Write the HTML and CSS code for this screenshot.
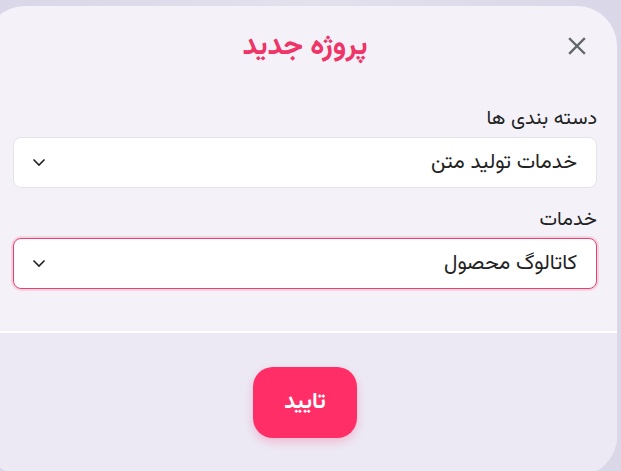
FILE: index.html
```html
<!DOCTYPE html>
<html lang="fa" dir="rtl">
<head>
<meta charset="utf-8">
<title>پروژه جدید</title>
<link rel="stylesheet" href="styles.css">
</head>
<body>
<div class="dialog">
  <div class="dialog-body">
    <div class="dialog-head">
      <h2 class="dialog-title">پروژه جدید</h2>
      <button class="close-btn" aria-label="بستن">
        <svg width="20" height="20" viewBox="0 0 20 20"><path d="M3 3 L17 17 M17 3 L3 17" stroke="#62676b" stroke-width="2.4" stroke-linecap="square" fill="none"/></svg>
      </button>
    </div>

    <div class="field">
      <label class="field-label">دسته بندی ها</label>
      <div class="select">
        <span>خدمات تولید متن</span>
        <svg class="chev" width="14" height="9" viewBox="0 0 14 9"><path d="M1.5 1.5 L7 7 L12.5 1.5" stroke="#222" stroke-width="1.6" fill="none"/></svg>
      </div>
    </div>

    <div class="field">
      <label class="field-label">خدمات</label>
      <div class="select active">
        <span>کاتالوگ محصول</span>
        <svg class="chev" width="14" height="9" viewBox="0 0 14 9"><path d="M1.5 1.5 L7 7 L12.5 1.5" stroke="#222" stroke-width="1.6" fill="none"/></svg>
      </div>
    </div>
  </div>

  <div class="dialog-foot">
    <button class="ok-btn">تایید</button>
  </div>
</div>
</body>
</html>
```

FILE: styles.css
```css
html, body {
  margin: 0;
  height: 100%;
  overflow: hidden;
}

body {
  font-family: "Vazirmatn", "Noto Sans Arabic", "DejaVu Sans", sans-serif;
  background: linear-gradient(90deg, #d9d7e8, #e3e1ec 50%, #d9d7e8);
  padding-top: 6px;
  box-sizing: border-box;
}

.dialog {
  width: 632px;
  height: 470px;
  margin-right: 4px;
  border-radius: 40px;
  overflow: hidden;
  background: #f4f2f8;
  display: flex;
  flex-direction: column;
}

.dialog-body {
  padding: 16px 20px 0 28px;
  height: 309px;
  border-bottom: 2px solid #ffffff;
}

.dialog-head {
  position: relative;
  height: 50px;
  display: flex;
  align-items: center;
  justify-content: center;
  margin-bottom: 35px;
}

.dialog-title {
  margin: 0;
  font-size: 29px;
  font-weight: 700;
  color: #ef3468;
}

.close-btn {
  position: absolute;
  right: 10px;
  top: 14px;
  border: none;
  background: none;
  padding: 0;
  width: 20px;
  height: 20px;
  cursor: pointer;
}

.field {
  margin-bottom: 20px;
}

.field-label {
  display: block;
  font-size: 20px;
  color: #222;
  line-height: 24px;
  margin-bottom: 6px;
}

.select {
  height: 51px;
  box-sizing: border-box;
  background: #fff;
  border: 1px solid #e4e3ea;
  border-radius: 8px;
  display: flex;
  align-items: center;
  justify-content: space-between;
  padding: 0 19px 0 18px;
  font-size: 21px;
  font-weight: 400;
  color: #222;
}

.select.active {
  border-color: #e8416f;
  box-shadow: 0 0 0 2px rgba(255, 46, 103, 0.15);
}

.dialog-foot {
  flex: 1;
  background: #ece9f5;
  display: flex;
  justify-content: center;
  padding-top: 34px;
  padding-left: 8px;
}

.ok-btn {
  width: 104px;
  height: 71px;
  border: none;
  border-radius: 20px;
  background: #ff2e67;
  color: #fff;
  font-family: inherit;
  font-size: 22px;
  font-weight: 700;
  box-shadow: 0 4px 10px rgba(255, 46, 103, 0.25);
}
```
